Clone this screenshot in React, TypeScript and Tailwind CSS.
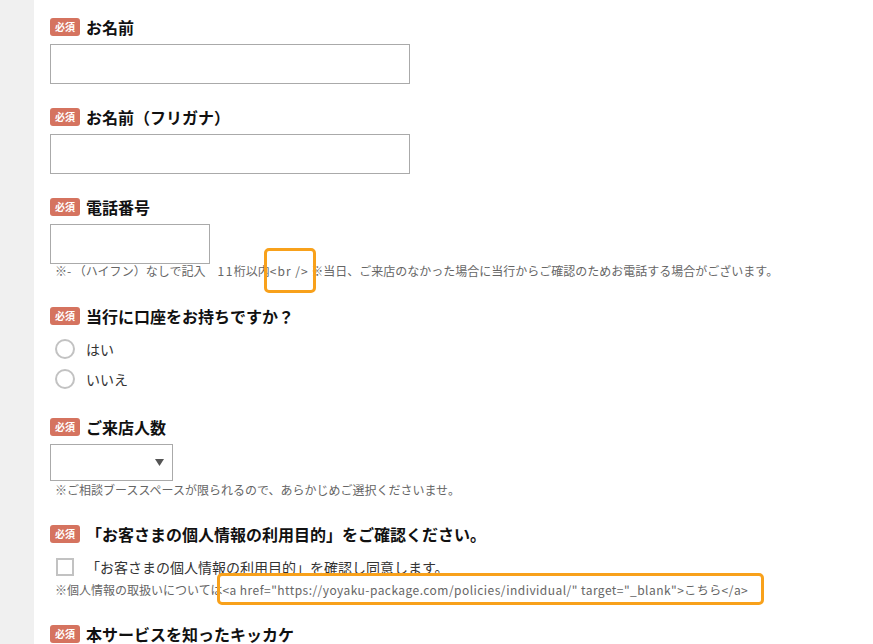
import { ReactNode } from "react";

const font = { fontFamily: '"Noto Sans CJK JP", "Noto Sans", sans-serif' };

function Badge() {
    return (
        <span className="inline-flex h-[18px] w-[30px] shrink-0 items-center justify-center rounded-[3px] bg-[#d5735f] text-[10px] font-bold leading-none text-white">
            必須
        </span>
    );
}

function FieldLabel({ children }: { children: ReactNode }) {
    return (
        <div className="flex h-[24px] items-center gap-[6px]">
            <Badge />
            <span className="text-[16px] font-bold leading-[24px] text-[#111]">{children}</span>
        </div>
    );
}

// orange annotation drawn over a piece of text
function Marked({ children, box, className = "" }: { children: ReactNode; box: string; className?: string }) {
    return (
        <span className={`relative ${className}`}>
            {children}
            <span className={`pointer-events-none absolute rounded-[5px] border-[3px] border-[#f8a11b] ${box}`} />
        </span>
    );
}

function Note({ children, className = "" }: { children: ReactNode; className?: string }) {
    return <p className={`pl-[5px] text-[12px] leading-[14px] text-[#666] whitespace-nowrap ${className}`}>{children}</p>;
}

function Radio({ label }: { label: string }) {
    return (
        <label className="flex h-[30px] items-center gap-[11px] pl-[5px]">
            <span className="h-[20px] w-[20px] rounded-full border-2 border-[#c2c2c2] bg-white" />
            <span className="text-[14px] text-[#333]">{label}</span>
        </label>
    );
}

function SelectBox({ width }: { width: string }) {
    return (
        <div className={`mt-[5px] flex h-[37px] items-center justify-end border border-[#aaa] bg-white pr-[8px] ${width}`}>
            <svg width="9" height="7" viewBox="0 0 9 7">
                <path d="M0 0 L9 0 L4.5 7 Z" fill="#555" />
            </svg>
        </div>
    );
}

function App() {
    return (
        <div className="flex min-h-screen bg-white" style={font}>
            <div className="w-[34px] shrink-0 bg-[#f0f0f0]" />
            <div className="flex-1 pl-[16px] pt-[15px]">
                <div className="mb-[21px]">
                    <FieldLabel>お名前</FieldLabel>
                    <div className="mt-[5px] h-[40px] w-[360px] border border-[#aaa] bg-white" />
                </div>

                <div className="mb-[21px]">
                    <FieldLabel>お名前（フリガナ）</FieldLabel>
                    <div className="mt-[5px] h-[40px] w-[360px] border border-[#aaa] bg-white" />
                </div>

                <div className="mb-[26px]">
                    <FieldLabel>電話番号</FieldLabel>
                    <div className="mt-[5px] h-[40px] w-[160px] border border-[#aaa] bg-white" />
                    <Note>
                        ※- （ハイフン）なしで記入　<span className="tracking-[1.5px]">11</span>桁以内
                        <Marked className="tracking-[1px]" box="-left-[6px] -right-[7px] -top-[14px] -bottom-[14px]">&lt;br /&gt;</Marked>
                        {" "}※当日、ご来店のなかった場合に当行からご確認のためお電話する場合がございます。
                    </Note>
                </div>

                <div className="mb-[21px]">
                    <FieldLabel>当行に口座をお持ちですか？</FieldLabel>
                    <div className="mt-[6px]">
                        <Radio label="はい" />
                        <Radio label="いいえ" />
                    </div>
                </div>

                <div className="mb-[25px]">
                    <FieldLabel>ご来店人数</FieldLabel>
                    <SelectBox width="w-[123px]" />
                    <Note className="mt-[2px]">※ご相談ブーススペースが限られるので、あらかじめご選択くださいませ。</Note>
                </div>

                <div className="mb-[25px]">
                    <FieldLabel>「お客さまの個人情報の利用目的」をご確認ください。</FieldLabel>
                    <label className="mt-[9px] flex h-[24px] items-center gap-[12px] pl-[6px]">
                        <span className="h-[18px] w-[18px] border-2 border-[#c2c2c2] bg-white" />
                        <span className="text-[14px] text-[#333]">「お客さまの個人情報の利用目的」を確認し同意します。</span>
                    </label>
                    <Note className="mt-[4px]">
                        ※個人情報の取扱いについては
                        <Marked className="tracking-[0.45px]" box="-left-[5px] -right-[16px] -top-[8px] -bottom-[7px]">
                            &lt;a href="https://yoyaku-package.com/policies/individual/" target="_blank"&gt;こちら&lt;/a&gt;
                        </Marked>
                    </Note>
                </div>

                <div className="mb-[21px]">
                    <FieldLabel>本サービスを知ったキッカケ</FieldLabel>
                    <SelectBox width="w-[240px]" />
                </div>
            </div>
        </div>
    );
}

export default App;
